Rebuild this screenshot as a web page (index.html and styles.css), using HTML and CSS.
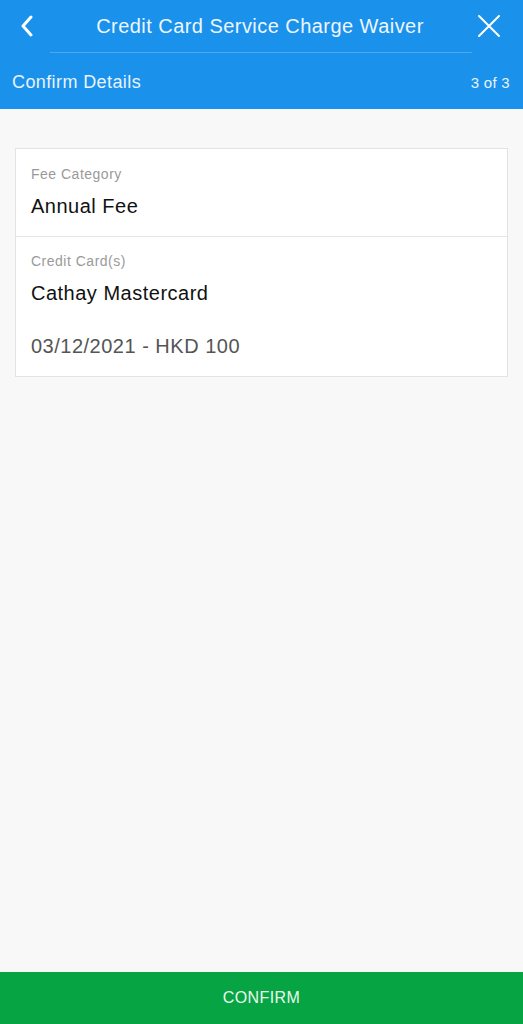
FILE: index.html
```html
<!DOCTYPE html>
<html>
<head>
<meta charset="utf-8">
<link rel="stylesheet" href="styles.css">
</head>
<body>
<div class="app">
  <header class="header">
    <div class="topbar">
      <button class="icon-btn back" aria-label="Back">
        <svg width="16" height="22" viewBox="0 0 16 22"><path d="M12 2 L4 11 L12 20" fill="none" stroke="#fff" stroke-width="3" stroke-linecap="round" stroke-linejoin="round"/></svg>
      </button>
      <div class="title">Credit Card Service Charge Waiver</div>
      <button class="icon-btn close" aria-label="Close">
        <svg width="24" height="24" viewBox="0 0 24 24"><path d="M2 2 L22 22 M22 2 L2 22" fill="none" stroke="#fff" stroke-width="2" stroke-linecap="round"/></svg>
      </button>
    </div>
    <div class="divider-wrap"><div class="divider"></div></div>
    <div class="subbar">
      <span class="step-name">Confirm Details</span>
      <span class="step-count">3 of 3</span>
    </div>
  </header>
  <main class="content">
    <section class="card">
      <div class="row">
        <div class="label">Fee Category</div>
        <div class="value">Annual Fee</div>
      </div>
      <div class="row">
        <div class="label">Credit Card(s)</div>
        <div class="value">Cathay Mastercard</div>
        <div class="value sub">03/12/2021 - HKD 100</div>
      </div>
    </section>
  </main>
  <footer class="footer">
    <button class="confirm">CONFIRM</button>
  </footer>
</div>
</body>
</html>
```
FILE: styles.css
```css
* { box-sizing: border-box; }
html, body { margin: 0; padding: 0; }
body {
  font-family: "Liberation Sans", Arial, sans-serif;
  background: #f8f8f8;
}
.app {
  display: flex;
  flex-direction: column;
  height: 1024px;
}
.header {
  background: #1a91eb;
  color: #fff;
  height: 109px;
  display: flex;
  flex-direction: column;
}
.topbar {
  height: 52px;
  display: flex;
  align-items: center;
  justify-content: space-between;
  padding: 0 22px 0 17px;
}
.icon-btn {
  background: none;
  border: 0;
  padding: 0;
  display: flex;
  align-items: center;
  justify-content: center;
}
.back { width: 20px; height: 26px; }
.close { width: 24px; height: 24px; }
.title {
  font-size: 20px;
  color: #eef6fd;
  letter-spacing: 0.45px;
  padding-left: 6px;
}
.divider-wrap { padding: 0 51px 0 50px; }
.divider {
  height: 1px;
  background: #4aa8ef;
}
.subbar {
  flex: 1;
  display: flex;
  align-items: center;
  justify-content: space-between;
  padding: 3px 13px 0 12px;
  color: #e8f3fd;
}
.step-name { font-size: 18px; letter-spacing: 0.4px; }
.step-count { font-size: 15px; letter-spacing: 0.3px; }
.content {
  flex: 1;
  padding: 39px 15px 0 15px;
}
.card {
  background: #fff;
  border: 1px solid #e3e3e3;
}
.row {
  padding: 16px 15px 19px;
  border-top: 1px solid #e6e6e6;
}
.row + .row { padding-top: 15px; padding-bottom: 19px; }
.row:first-child { border-top: 0; }
.label {
  font-size: 14px;
  color: #9a9a9a;
  line-height: 18px;
  letter-spacing: 0.5px;
}
.value {
  font-size: 20px;
  color: #111;
  line-height: 22px;
  margin-top: 12px;
  letter-spacing: 0.5px;
}
.value.sub {
  color: #555;
  margin-top: 31px;
}
.footer { height: 52px; }
.confirm {
  width: 100%;
  height: 52px;
  border: 0;
  background: #07a443;
  color: #e9f8ee;
  font-family: "Liberation Sans", Arial, sans-serif;
  font-size: 16px;
  letter-spacing: 0.4px;
}
```
